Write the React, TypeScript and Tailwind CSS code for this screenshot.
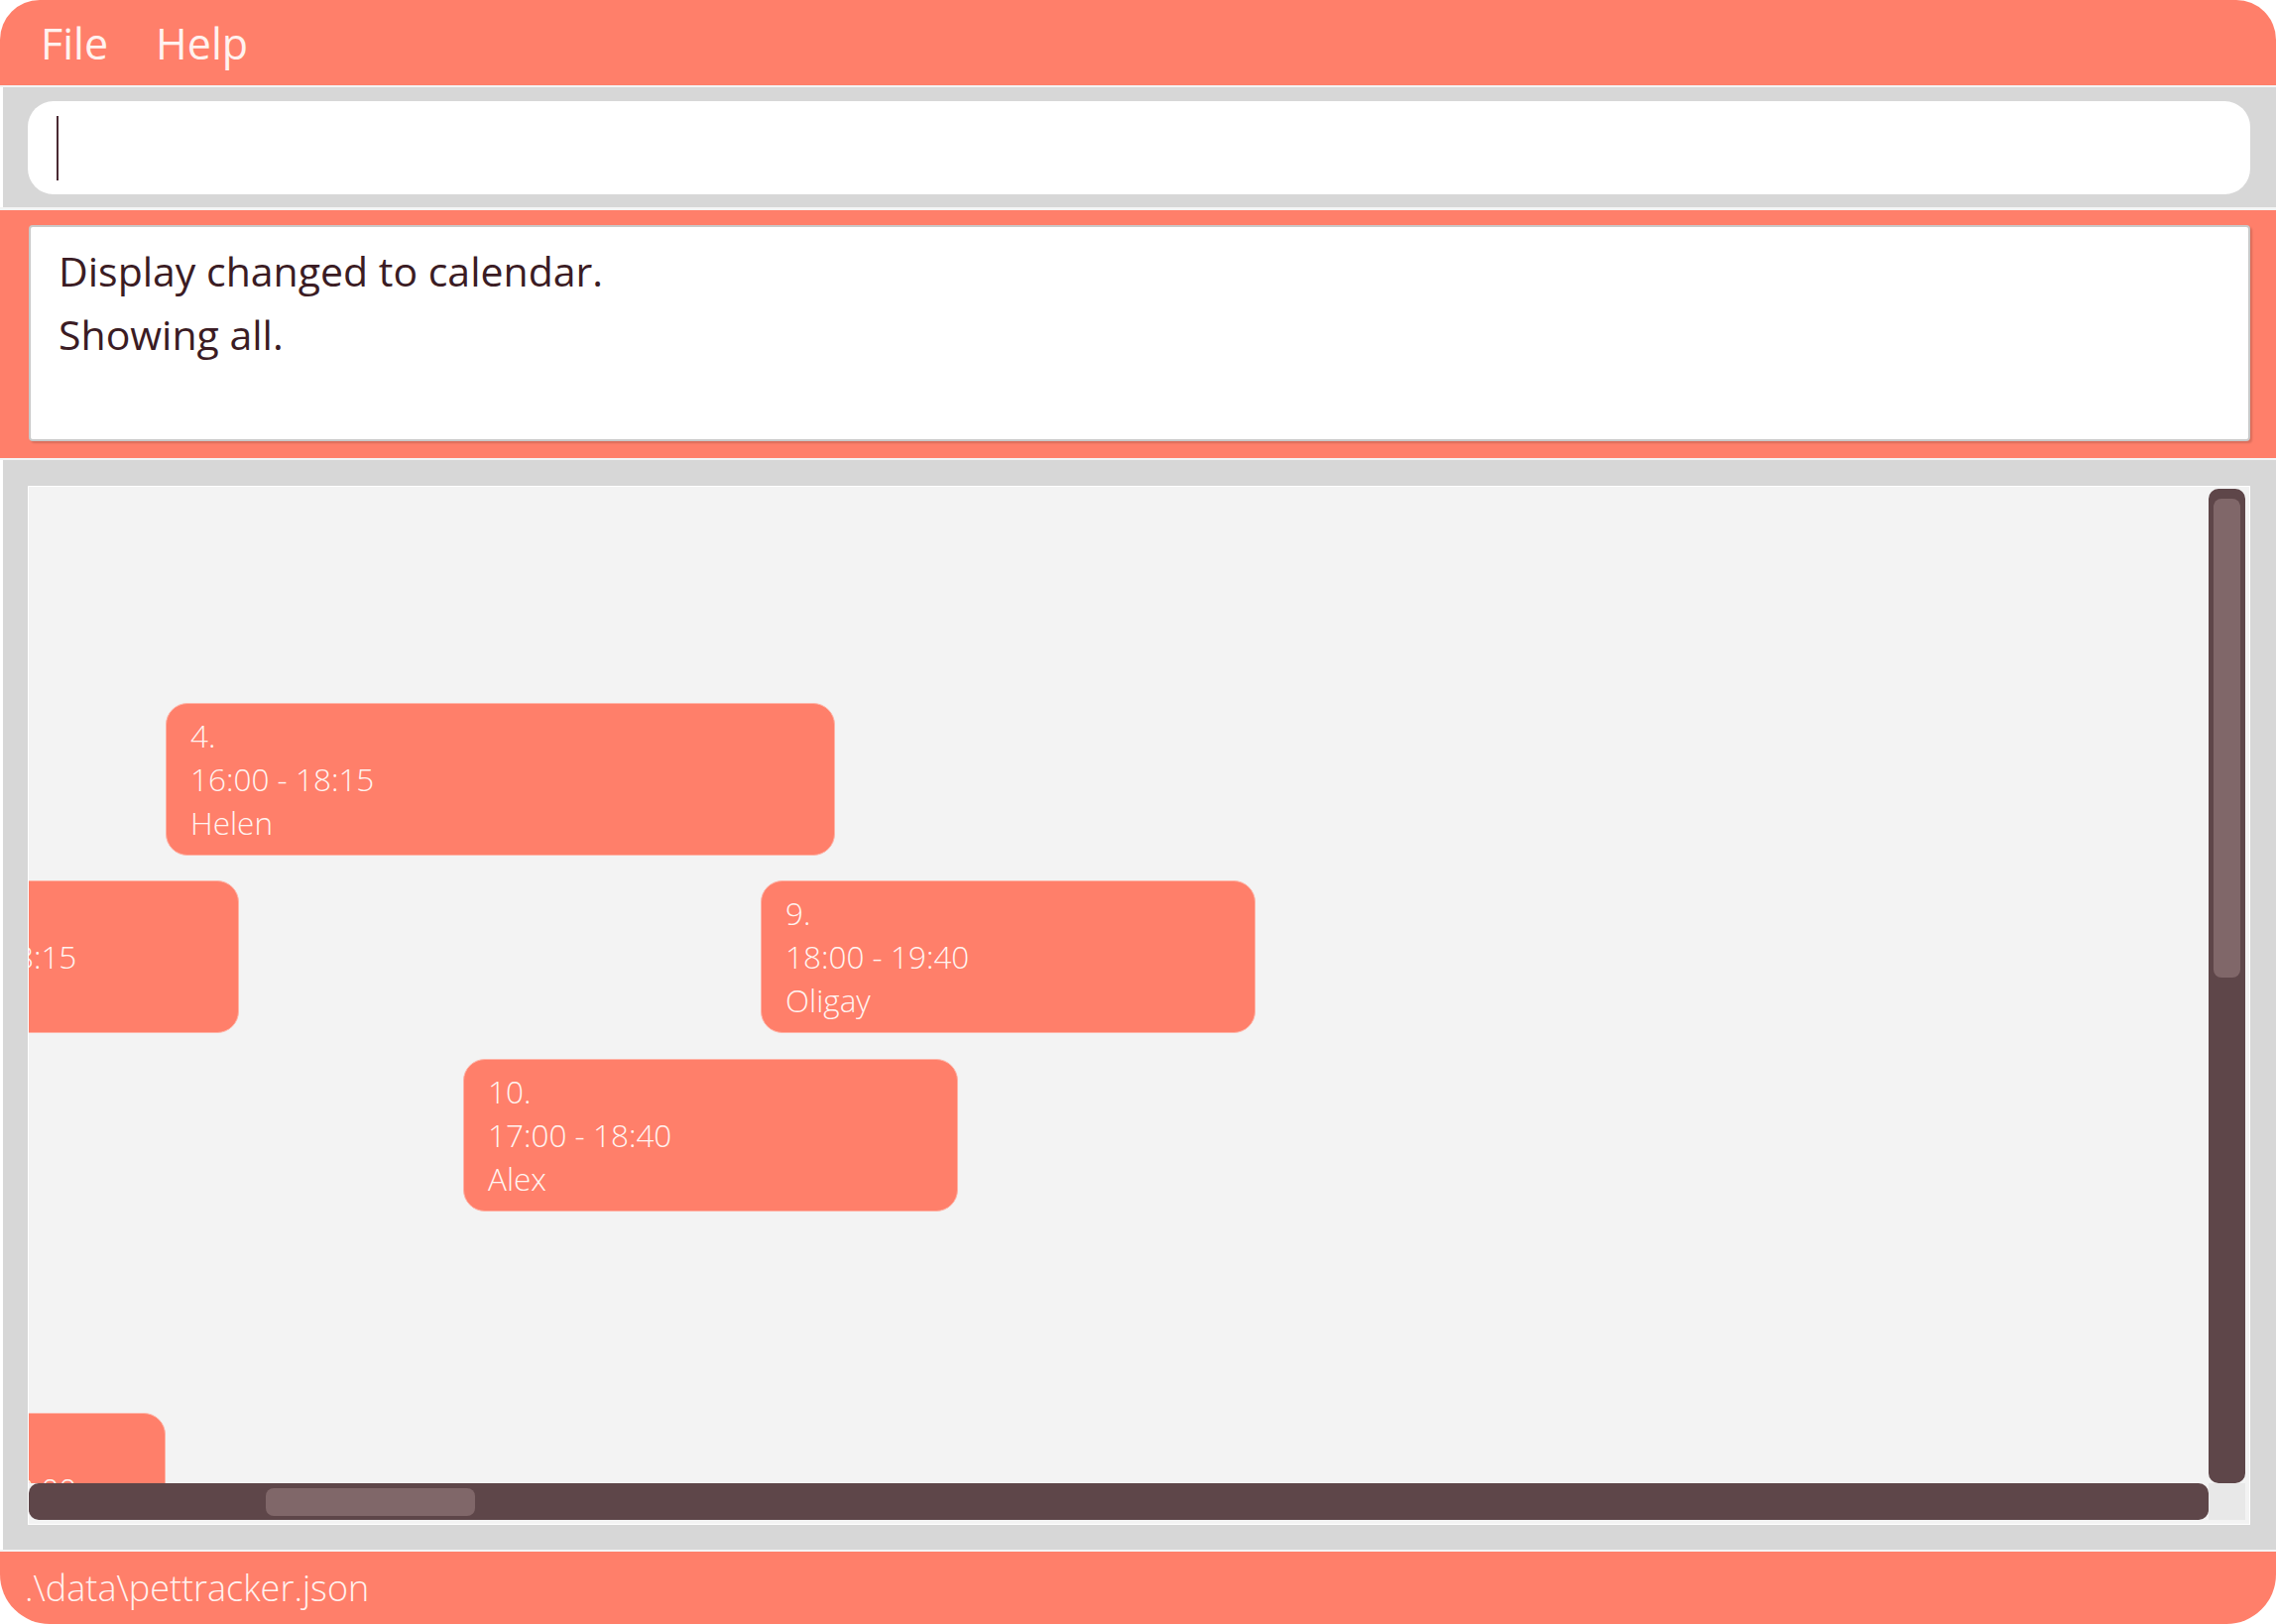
import React from "react"

type Slot = {
  id: string
  time: string
  name: string
  left: number
  top: number
  width: number
}

// calendar canvas is scrolled, so some cards start off the left edge
const slots: Slot[] = [
  { id: "4.", time: "16:00 - 18:15", name: "Helen", left: 138, top: 218, width: 675 },
  { id: "3.", time: "16:30 - 18:15", name: "Sam", left: -162, top: 397, width: 374 },
  { id: "9.", time: "18:00 - 19:40", name: "Oligay", left: 738, top: 397, width: 499 },
  { id: "10.", time: "17:00 - 18:40", name: "Alex", left: 438, top: 577, width: 499 },
  { id: "5.", time: "16:15 - 18:00", name: "Tom", left: -162, top: 934, width: 300 },
]

function MenuBar() {
  return (
    <div className="h-[86px] bg-[#ff7f6a] flex items-center gap-[48px] pl-[41px] text-[43px] text-[#fff2ef] leading-none">
      <span>File</span>
      <span>Help</span>
    </div>
  )
}

function CommandBox() {
  return (
    <div className="h-[121px] bg-[#d7d7d7] border-l-[3px] border-white pt-[14px] pl-[25px] pr-[26px]">
      <div className="h-[94px] bg-white rounded-[26px] flex items-center pl-[29px]">
        <div className="w-[2px] h-[65px] bg-[#4a2a33]" />
      </div>
    </div>
  )
}

function ResultBox() {
  return (
    <div className="h-[250px] bg-[#ff7f6a] pt-[15px] pl-[29px] pr-[26px]">
      <div className="h-[218px] bg-white rounded-[4px] border-2 border-[#c9c9c9] shadow-[2px_2px_2px_rgba(0,0,0,0.15)] pl-[28px] pt-[12px] text-[41px] leading-[64px] text-[#3b1c24]">
        <div>Display changed to calendar.</div>
        <div>Showing all.</div>
      </div>
    </div>
  )
}

function SlotCard({ slot }: { slot: Slot }) {
  return (
    <div
      className="absolute h-[154px] bg-[#ff7f6a] rounded-[22px] border border-[#ffb3a6] pl-[24px] pt-[10px] text-[31.5px] font-light leading-[44px] text-[#fff4f1] whitespace-nowrap"
      style={{ left: slot.left, top: slot.top, width: slot.width }}
    >
      <div>{slot.id}</div>
      <div>{slot.time}</div>
      <div>{slot.name}</div>
    </div>
  )
}

function CalendarPanel() {
  return (
    <div className="flex-1 bg-[#d7d7d7] border-l-[3px] border-white pt-[26px] pl-[25px] pr-[26px] pb-[25px] flex">
      <div className="flex-1 bg-[#f3f3f3] border border-white flex flex-col pr-[4px] pb-[4px]">
        <div className="flex-1 flex">
          <div className="flex-1 relative overflow-hidden">
            {slots.map((s) => (
              <SlotCard key={s.id} slot={s} />
            ))}
          </div>
          <div className="w-[37px] bg-[#5e4649] rounded-[10px] mt-[2px] pt-[10px] px-[5px]">
            <div className="h-[483px] bg-[#806769] rounded-[8px]" />
          </div>
        </div>
        <div className="h-[37px] flex">
          <div className="flex-1 bg-[#5e4649] rounded-[10px] flex items-center pl-[239px]">
            <div className="w-[211px] h-[28px] bg-[#806769] rounded-[8px]" />
          </div>
          <div className="w-[37px] bg-[#e8e8e8]" />
        </div>
      </div>
    </div>
  )
}

function StatusBar() {
  return (
    <div className="h-[73px] bg-[#ff7f6a] flex items-center pl-[25px] text-[36px] font-light text-[#fff2ef]">
      .\data\pettracker.json
    </div>
  )
}

export default function App() {
  return (
    <div className="w-[2295px] h-[1638px] bg-white" style={{ fontFamily: '"Open Sans", sans-serif' }}>
      <div className="h-full flex flex-col rounded-t-[40px] rounded-b-[50px] overflow-hidden bg-white">
        <MenuBar />
        <div className="h-[2px] bg-[#f4f4f4]" />
        <CommandBox />
        <div className="h-[3px] bg-[#f4f4f4]" />
        <ResultBox />
        <div className="h-[2px] bg-[#f4f4f4]" />
        <CalendarPanel />
        <div className="h-[2px] bg-[#f4f4f4]" />
        <StatusBar />
      </div>
    </div>
  )
}
